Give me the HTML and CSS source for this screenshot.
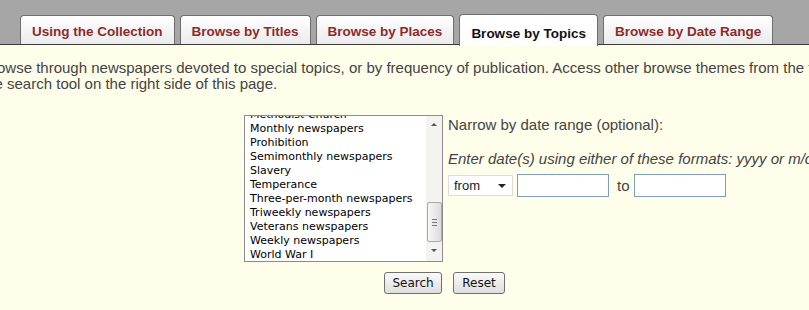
FILE: index.html
```html
<!DOCTYPE html>
<html lang="en">

<head>
    <meta charset="UTF-8">
    <title>Browse by Topics</title>
    <link rel="stylesheet" href="styles.css">
</head>

<body>

    <div id="tab-bar">
        <ul class="tabs">
            <li class="tab"><a href="#">Using the Collection</a></li>
            <li class="tab"><a href="#">Browse by Titles</a></li>
            <li class="tab"><a href="#">Browse by Places</a></li>
            <li class="tab active"><a href="#">Browse by Topics</a></li>
            <li class="tab"><a href="#">Browse by Date Range</a></li>
        </ul>
    </div>

    <div id="content">
        <p class="intro">Browse through newspapers devoted to special topics, or by frequency of publication. Access other browse themes from the tabs above, or the search tool on the right side of this page.</p>

        <form id="topic-form" onsubmit="event.preventDefault()">
            <div class="search-row">
                <!-- Topic list (scrolled near the bottom) -->
                <div class="listbox">
                    <ul class="topic-list">
                        <li>Methodist Church</li>
                        <li>Monthly newspapers</li>
                        <li>Prohibition</li>
                        <li>Semimonthly newspapers</li>
                        <li>Slavery</li>
                        <li>Temperance</li>
                        <li>Three-per-month newspapers</li>
                        <li>Triweekly newspapers</li>
                        <li>Veterans newspapers</li>
                        <li>Weekly newspapers</li>
                        <li>World War I</li>
                    </ul>
                    <div class="scrollbar">
                        <span class="arrow up"></span>
                        <span class="thumb"><i></i><i></i><i></i></span>
                        <span class="arrow down"></span>
                    </div>
                </div>

                <!-- Date range -->
                <div class="date-range">
                    <p class="date-label">Narrow by date range (optional):</p>
                    <p class="date-hint">Enter date(s) using either of these formats: yyyy or m/d/yyyy</p>
                    <div class="date-fields">
                        <span class="date-type">from<span class="caret"></span></span>
                        <input type="text" class="date-input">
                        <span class="to">to</span>
                        <input type="text" class="date-input">
                    </div>
                </div>
            </div>

            <div class="buttons">
                <button type="submit" class="btn search">Search</button>
                <button type="reset" class="btn reset">Reset</button>
            </div>
        </form>
    </div>

</body>

</html>
```

FILE: styles.css
```css
body {
    margin: 0;
    width: 809px;
    height: 310px;
    overflow: hidden;
    font-family: 'Liberation Sans', Arial, sans-serif;
    background-color: #fffeea;
}

#tab-bar {
    background-color: #a6a6a6;
    height: 44px;
    border-bottom: 1px solid #3a3a3a;
}

.tabs {
    list-style: none;
    margin: 0;
    padding: 15px 0 0 20px;
    display: flex;
    gap: 5px;
}

.tab {
    height: 28px;
    border: 1px solid #6e6e6e;
    border-bottom: none;
    border-radius: 4px 4px 0 0;
    background: linear-gradient(#ffffff, #ebebeb);
}

.tab a {
    display: block;
    padding: 8px 11px 0 11px;
    font-size: 13.5px;
    font-weight: bold;
    color: #8c2b2b;
    text-decoration: none;
}

.tab.active {
    height: 31px;
    margin-top: -1px;
    background: #ffffff;
    position: relative;
    z-index: 1;
}

.tab.active a {
    padding-top: 11px;
    color: #111;
}

#content {
    padding-top: 15px;
}

.intro {
    margin: 0 0 0 -18px;
    width: 945px;
    font-size: 15px;
    line-height: 16px;
    color: #444;
}

#topic-form {
    margin: 23px 0 0 244px;
}

.search-row {
    display: flex;
    gap: 5px;
}

.listbox {
    flex-shrink: 0;
    width: 197px;
    height: 145px;
    border: 1px solid #8c8c8c;
    background: #fff;
    position: relative;
    overflow: hidden;
}

.topic-list {
    list-style: none;
    margin: -8px 0 0 0;
    padding: 0 0 0 5px;
    font-family: 'DejaVu Sans', Tahoma, sans-serif;
    font-size: 11px;
    line-height: 14px;
    white-space: nowrap;
    color: #000;
}

.scrollbar {
    position: absolute;
    top: 0;
    right: 0;
    width: 16px;
    height: 145px;
    background: #f3f3f0;
    display: flex;
    flex-direction: column;
}

.arrow {
    height: 16px;
    position: relative;
}

.arrow::after {
    content: "";
    position: absolute;
    left: 5px;
    border-left: 3px solid transparent;
    border-right: 3px solid transparent;
}

.arrow.up::after {
    top: 7px;
    border-bottom: 3px solid #555;
}

.arrow.down::after {
    top: 7px;
    border-top: 3px solid #555;
}

.thumb {
    margin-top: 70px;
    height: 38px;
    margin-left: 1px;
    width: 13px;
    border: 1px solid #a9a9a9;
    border-radius: 2px;
    background: linear-gradient(90deg, #f7f7f7, #dcdcdc);
    display: flex;
    flex-direction: column;
    justify-content: center;
    align-items: center;
    gap: 2px;
}

.thumb i {
    display: block;
    width: 5px;
    height: 1px;
    background: #777;
}

.date-range {
    font-size: 15px;
    color: #444;
}

.date-label {
    margin: 0;
    padding-top: 2px;
    line-height: 16px;
}

.date-hint {
    margin: 18px 0 0 0;
    line-height: 16px;
    font-style: italic;
    white-space: nowrap;
}

.date-fields {
    display: flex;
    align-items: center;
    margin-top: 7px;
}

.date-type {
    width: 58px;
    height: 19px;
    border: 1px solid #dcdcdc;
    background: #fff;
    font-size: 13px;
    line-height: 19px;
    padding-left: 5px;
    position: relative;
    color: #222;
}

.caret {
    position: absolute;
    right: 6px;
    top: 8px;
    border-left: 4px solid transparent;
    border-right: 4px solid transparent;
    border-top: 4px solid #222;
}

.date-input {
    box-sizing: border-box;
    border: 1px solid #7f9db9;
    margin: 0 0 0 4px;
    padding: 0;
    width: 92px;
    height: 23px;
}

.to {
    margin: 0 0 0 8px;
}

.buttons {
    display: flex;
    gap: 11px;
    margin: 10px 0 0 140px;
}

.btn {
    height: 22px;
    padding: 0;
    font-family: 'DejaVu Sans', Tahoma, sans-serif;
    font-size: 12px;
    color: #111;
    border: 1px solid #707070;
    border-radius: 3px;
    background: linear-gradient(#fafafa, #dedede);
}

.btn.search {
    width: 58px;
}

.btn.reset {
    width: 52px;
}
```
